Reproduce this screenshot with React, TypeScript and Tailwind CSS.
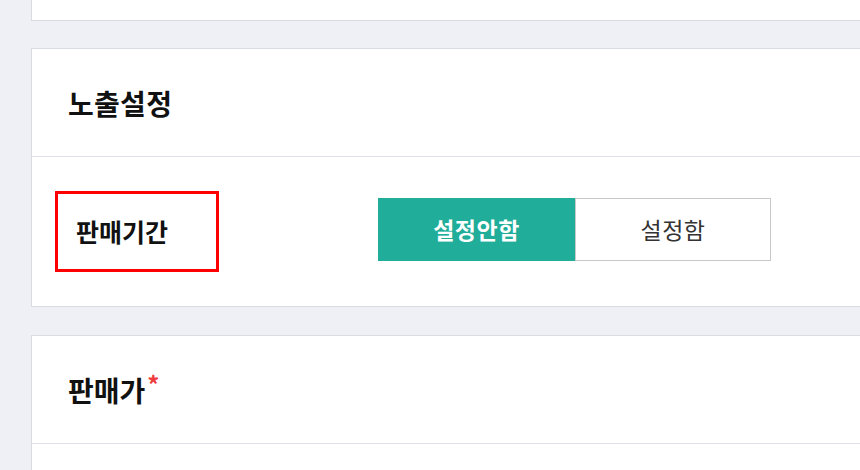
export default function App() {
  return (
    <div
      className="w-[860px] h-[470px] overflow-hidden bg-[#eef0f5] pl-[31px] text-[#111]"
      style={{ fontFamily: '"Noto Sans CJK KR", "Noto Sans", sans-serif' }}
    >
      <div className="w-[900px]">
        {/* previous card (cut off at top) */}
        <div className="h-[21px] bg-white border-x border-b border-[#d8dbe2]" />

        {/* 노출설정 */}
        <section className="mt-[27px] bg-white border border-[#d8dbe2]">
          <div className="h-[108px] flex items-center pl-[36px] border-b border-[#dfe2e8]">
            <h2 className="text-[28px] font-bold leading-none tracking-[0.3px]">노출설정</h2>
          </div>
          <div className="h-[149px] flex items-center pl-[23px]">
            <div className="w-[164px] h-[81px] border-[3px] border-[#f00] flex items-center pl-[18px]">
              <span className="text-[25px] font-bold leading-none">판매기간</span>
            </div>
            <div className="ml-[159px] -mt-[4px] flex">
              <button className="w-[197px] h-[63px] bg-[#20ad99] text-white text-[23px] font-bold tracking-[0.5px]">
                설정안함
              </button>
              <button className="w-[196px] h-[63px] bg-white border border-[#c9c9c9] text-[#333] text-[23px] tracking-[0.5px]">
                설정함
              </button>
            </div>
          </div>
        </section>

        {/* 판매가 */}
        <section className="mt-[28px] bg-white border border-[#d8dbe2]">
          <div className="h-[108px] flex items-center pl-[36px] border-b border-[#dfe2e8]">
            <h2 className="text-[28px] font-bold leading-none">
              판매가<span className="text-[#f03c3c] text-[24px] relative -top-[8px] ml-[2px]">*</span>
            </h2>
          </div>
          <div className="h-[60px]" />
        </section>
      </div>
    </div>
  );
}
